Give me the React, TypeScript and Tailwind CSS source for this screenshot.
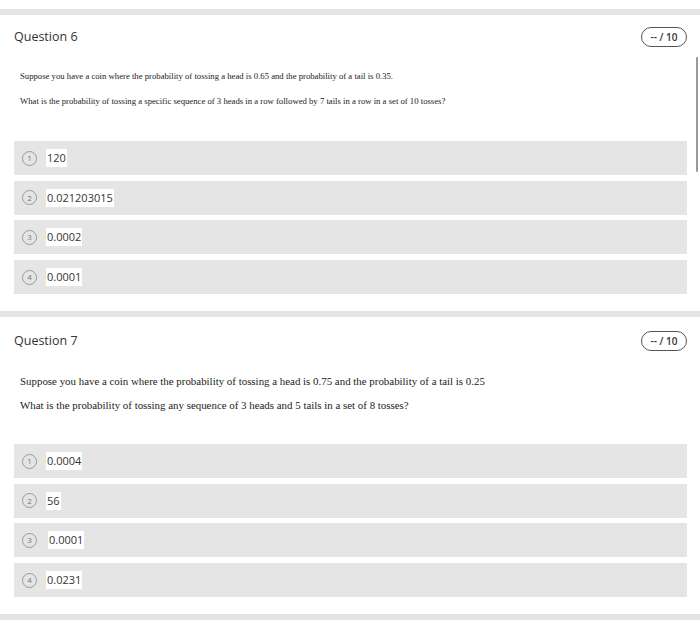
import React from "react";

function Option({ n, text, indent }: { n: number; text: string; indent?: boolean }) {
  return (
    <div className="h-[34px] bg-[#e5e5e5] flex items-center pl-[8px]">
      <div className="w-[15px] h-[15px] rounded-full border border-[#9a9a9a] flex items-center justify-center text-[8px] leading-none text-[#777] [font-family:'Open_Sans',sans-serif]">
        {n}
      </div>
      <span
        className={`${indent ? "ml-[11px]" : "ml-[9px]"} bg-white px-[1px] text-[11px] leading-[18px] text-[#333] [font-family:'Open_Sans',sans-serif]`}
      >
        {text}
      </span>
    </div>
  );
}

function Badge() {
  return (
    <div className="w-[46px] h-[20px] rounded-full border border-[#555] flex items-center justify-center text-[10px] text-[#333] [font-family:'Open_Sans',sans-serif] font-semibold">
      -- / 10
    </div>
  );
}

export default function App() {
  return (
    <div className="relative w-[700px] h-[623px] bg-white overflow-hidden">
      <div className="h-[9px]" />
      <div className="h-[6px] bg-[#e4e4e4]" />
      {/* Question 6 */}
      <div className="pl-[14px] pr-[13px]">
        <div className="flex items-center justify-between h-[34px] mt-[5px]">
          <div className="text-[12.5px] text-[#333] [font-family:'Open_Sans',sans-serif]">Question 6</div>
          <Badge />
        </div>
        <div className="pl-[6px] mt-[16px] text-[8.7px] leading-[12px] text-[#222] [font-family:'Liberation_Serif',serif]">
          <p>Suppose you have a coin where the probability of tossing a head is 0.65 and the probability of a tail is 0.35.</p>
          <p className="mt-[13px]">What is the probability of tossing a specific sequence of 3 heads in a row followed by 7 tails in a row in a set of 10 tosses?</p>
        </div>
        <div className="mt-[34px] flex flex-col gap-[5.7px]">
          <Option n={1} text="120" />
          <Option n={2} text="0.021203015" />
          <Option n={3} text="0.0002" />
          <Option n={4} text="0.0001" />
        </div>
      </div>
      <div className="h-[17px]" />
      <div className="h-[6px] bg-[#e4e4e4]" />
      {/* Question 7 */}
      <div className="pl-[14px] pr-[13px]">
        <div className="flex items-center justify-between h-[22px] mt-[13px]">
          <div className="text-[12.5px] text-[#333] [font-family:'Open_Sans',sans-serif]">Question 7</div>
          <Badge />
        </div>
        <div className="pl-[6px] mt-[22px] text-[10.9px] leading-[14px] text-[#222] [font-family:'Liberation_Serif',serif]">
          <p>Suppose you have a coin where the probability of tossing a head is 0.75 and the probability of a tail is 0.25</p>
          <p className="mt-[10px]">What is the probability of tossing any sequence of 3 heads and 5 tails in a set of 8 tosses?</p>
        </div>
        <div className="mt-[32px] flex flex-col gap-[5.7px]">
          <Option n={1} text="0.0004" />
          <Option n={2} text="56" />
          <Option n={3} text="0.0001" indent />
          <Option n={4} text="0.0231" />
        </div>
      </div>
      <div className="h-[17px]" />
      <div className="h-[6px] bg-[#e4e4e4]" />
      {/* scrollbar overlay */}
      <div className="absolute left-[696px] top-[57px] w-[2px] h-[115px] bg-[#9a9a9a] rounded-full" />
    </div>
  );
}
